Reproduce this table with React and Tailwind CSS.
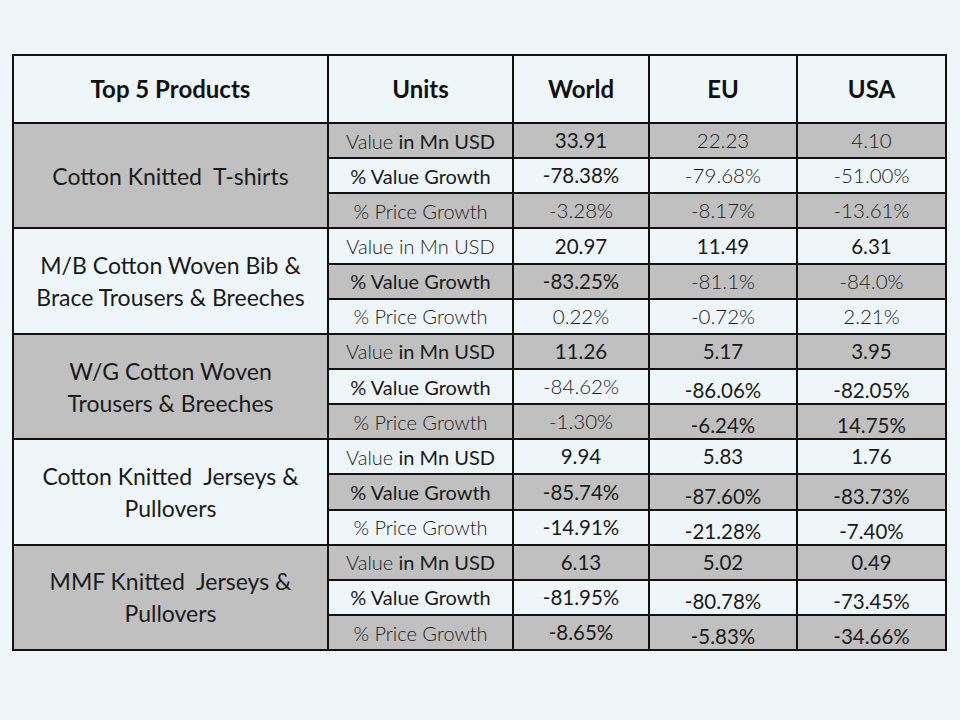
import React from "react";

const GRAY = "bg-[#c0c0c0]";
const LIGHT = "bg-[#eef6f9]";

// each cell: [text, weight, low]  weight: "r" regular, "l" light
const groups = [
  {
    name: ["Cotton Knitted\u00a0 T-shirts"],
    rows: [
      { unit: "mixed", cells: [["33.91", "r"], ["22.23", "l"], ["4.10", "l"]] },
      { unit: "value", cells: [["-78.38%", "r"], ["-79.68%", "l"], ["-51.00%", "l"]] },
      { unit: "price", cells: [["-3.28%", "l"], ["-8.17%", "l"], ["-13.61%", "l"]] },
    ],
  },
  {
    name: ["M/B Cotton Woven Bib &", "Brace Trousers & Breeches"],
    rows: [
      { unit: "light", cells: [["20.97", "r"], ["11.49", "r"], ["6.31", "r"]] },
      { unit: "value", cells: [["-83.25%", "r"], ["-81.1%", "l"], ["-84.0%", "l"]] },
      { unit: "price", cells: [["0.22%", "l"], ["-0.72%", "l"], ["2.21%", "l"]] },
    ],
  },
  {
    name: ["W/G Cotton Woven", "Trousers & Breeches"],
    rows: [
      { unit: "mixed", cells: [["11.26", "r"], ["5.17", "r"], ["3.95", "r"]] },
      { unit: "value", cells: [["-84.62%", "l"], ["-86.06%", "r", 1], ["-82.05%", "r", 1]] },
      { unit: "price", cells: [["-1.30%", "l"], ["-6.24%", "r", 1], ["14.75%", "r", 1]] },
    ],
  },
  {
    name: ["Cotton Knitted\u00a0 Jerseys &", "Pullovers"],
    rows: [
      { unit: "mixed", cells: [["9.94", "r"], ["5.83", "r"], ["1.76", "r"]] },
      { unit: "value", cells: [["-85.74%", "r"], ["-87.60%", "r", 1], ["-83.73%", "r", 1]] },
      { unit: "price", cells: [["-14.91%", "r"], ["-21.28%", "r", 1], ["-7.40%", "r", 1]] },
    ],
  },
  {
    name: ["MMF Knitted\u00a0 Jerseys &", "Pullovers"],
    rows: [
      { unit: "mixed", cells: [["6.13", "r"], ["5.02", "r"], ["0.49", "r"]] },
      { unit: "value", cells: [["-81.95%", "r"], ["-80.78%", "r", 1], ["-73.45%", "r", 1]] },
      { unit: "price", cells: [["-8.65%", "r"], ["-5.83%", "r", 1], ["-34.66%", "r", 1]] },
    ],
  },
];

function UnitLabel({ kind }) {
  if (kind === "mixed")
    return (
      <span>
        <span className="font-light text-[#1c1c1c]">Value</span> in Mn USD
      </span>
    );
  if (kind === "light") return <span className="font-light text-[#1c1c1c]">Value in Mn USD</span>;
  if (kind === "value") return <span>% Value Growth</span>;
  return <span className="font-light text-[#1c1c1c]">% Price Growth</span>;
}

export default function App() {
  const cells = [];
  let rowIdx = 0;

  groups.forEach((g, gi) => {
    g.rows.forEach((r, ri) => {
      const bg = rowIdx % 2 === 0 ? GRAY : LIGHT;
      if (ri === 0) {
        cells.push(
          <div
            key={`p${gi}`}
            className={`row-span-3 flex flex-col items-center justify-center text-[23px] leading-[32px] text-[#1a1a1a] ${gi % 2 === 0 ? GRAY : LIGHT}`}
          >
            {g.name.map((line) => (
              <span key={line}>{line}</span>
            ))}
          </div>
        );
      }
      cells.push(
        <div key={`u${rowIdx}`} className={`flex items-center justify-center text-[20px] text-[#1a1a1a] ${bg}`}>
          <UnitLabel kind={r.unit} />
        </div>
      );
      r.cells.forEach(([text, w, low], ci) => {
        cells.push(
          <div
            key={`c${rowIdx}-${ci}`}
            className={`flex items-center justify-center text-[20.5px] ${bg} ${
              w === "l" ? "font-light text-[#1c1c1c]" : "text-[#1a1a1a]"
            } ${low ? "pt-[8px]" : ""}`}
          >
            {text}
          </div>
        );
      });
      rowIdx++;
    });
  });

  return (
    <div
      className="w-[960px] h-[720px] bg-[#eef6f9] pt-[54px] pl-[12px]"
      style={{ fontFamily: "Lato, 'Open Sans', sans-serif" }}
    >
      <div className="grid w-[935px] grid-cols-[313px_183px_134px_146px_147px] grid-rows-[66px_repeat(15,33.15px)] gap-[2px] border-2 border-[#111] bg-[#111]">
        {["Top 5 Products", "Units", "World", "EU", "USA"].map((h) => (
          <div key={h} className={`flex items-center justify-center text-[24px] font-bold text-[#111] ${LIGHT}`}>
            {h}
          </div>
        ))}
        {cells}
      </div>
    </div>
  );
}
